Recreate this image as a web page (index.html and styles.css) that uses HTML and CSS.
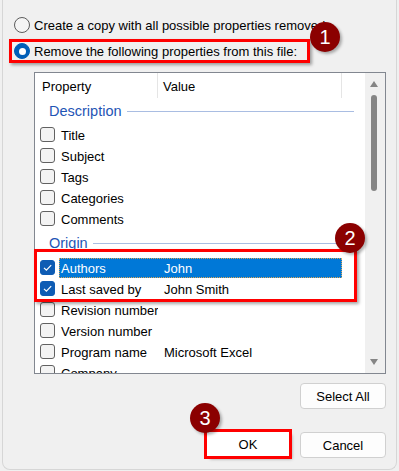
FILE: index.html
```html
<!DOCTYPE html>
<html>
<head>
<meta charset="utf-8">
<link rel="stylesheet" href="styles.css">
</head>
<body>
<div class="window">
  <div class="opt opt-first">
    <span class="radio"></span>
    <span class="opt-text">Create a copy with all possible properties removed</span>
  </div>
  <div class="opt opt-sel">
    <span class="radio radio-on"><span class="dot"></span></span>
    <span class="opt-text">Remove the following properties from this file:</span>
  </div>

  <div class="list">
    <div class="list-main">
      <div class="head">
        <div class="hcell hc1">Property</div>
        <div class="hcell hc2">Value</div>
        <div class="hcell hc3"></div>
      </div>
      <div class="group"><span class="gtext">Description</span><span class="rule"></span></div>
      <div class="row"><span class="cb"></span><div class="cells"><span class="name">Title</span><span class="val"></span></div></div>
      <div class="row"><span class="cb"></span><div class="cells"><span class="name">Subject</span><span class="val"></span></div></div>
      <div class="row"><span class="cb"></span><div class="cells"><span class="name">Tags</span><span class="val"></span></div></div>
      <div class="row"><span class="cb"></span><div class="cells"><span class="name">Categories</span><span class="val"></span></div></div>
      <div class="row"><span class="cb"></span><div class="cells"><span class="name">Comments</span><span class="val"></span></div></div>
      <div class="group group-2"><span class="gtext">Origin</span><span class="rule"></span></div>
      <div class="row"><span class="cb cb-on"><svg viewBox="0 0 15 15" width="15" height="15"><path d="M4 7.8 L6.4 10.2 L11.2 5.2" fill="none" stroke="#fff" stroke-width="1.2"/></svg></span><div class="cells cells-sel"><span class="name">Authors</span><span class="val">John</span></div></div>
      <div class="row"><span class="cb cb-on"><svg viewBox="0 0 15 15" width="15" height="15"><path d="M4 7.8 L6.4 10.2 L11.2 5.2" fill="none" stroke="#fff" stroke-width="1.2"/></svg></span><div class="cells"><span class="name">Last saved by</span><span class="val">John Smith</span></div></div>
      <div class="row"><span class="cb"></span><div class="cells"><span class="name">Revision number</span><span class="val"></span></div></div>
      <div class="row"><span class="cb"></span><div class="cells"><span class="name">Version number</span><span class="val"></span></div></div>
      <div class="row"><span class="cb"></span><div class="cells"><span class="name">Program name</span><span class="val">Microsoft Excel</span></div></div>
      <div class="row"><span class="cb"></span><div class="cells"><span class="name">Company</span><span class="val"></span></div></div>
    </div>
    <div class="scroll">
      <svg class="arrow" viewBox="0 0 8 6" width="8" height="6"><path d="M4 0 L8 6 L0 6 Z" fill="#858585"/></svg>
      <div class="thumb"></div>
      <div class="spacer"></div>
      <svg class="arrow" viewBox="0 0 8 6" width="8" height="6"><path d="M0 0 L8 0 L4 6 Z" fill="#858585"/></svg>
    </div>
  </div>

  <div class="actions">
    <button class="btn">Select All</button>
    <div class="btn-row">
      <div class="ok-wrap">
        <button class="btn btn-ok">OK</button>
        <span class="badge badge-3">3</span>
      </div>
      <button class="btn">Cancel</button>
    </div>
  </div>

  <span class="mark mark-1"></span>
  <span class="mark mark-2"></span>
  <span class="badge badge-1">1</span>
  <span class="badge badge-2">2</span>
</div>
</body>
</html>
```

FILE: styles.css
```css
* { box-sizing: border-box; }
html, body { margin: 0; padding: 0; }
body {
  background: #f0f0f0;
  font-family: "Segoe UI", "Liberation Sans", Arial, sans-serif;
  font-size: 13px;
  color: #000;
  width: 399px;
  height: 471px;
  overflow: hidden;
}
.window {
  position: relative;
  margin-left: 2px;
  width: 395px;
  height: 470px;
  border: 1px solid #d6d6d6;
  border-top: 0;
  border-radius: 0 0 8px 8px;
  padding-top: 17px;
}
.opt {
  display: flex;
  align-items: center;
  height: 16px;
  margin-left: 11px;
}
.opt-sel { margin-top: 9px; height: 18px; }
.radio {
  width: 16px;
  height: 16px;
  border-radius: 50%;
  border: 1px solid #5c5c5c;
  background: #f5f5f5;
  flex: none;
  display: flex;
  align-items: center;
  justify-content: center;
}
.radio-on { background: #005fb8; border-color: #005fb8; }
.dot { width: 7px; height: 7px; border-radius: 50%; background: #fff; }
.opt-text { margin-left: 4px; white-space: nowrap; }

.list {
  margin-top: 12px;
  margin-left: 31px;
  width: 352px;
  height: 302px;
  border: 1px solid #828790;
  background: #fff;
  display: flex;
}
.list-main {
  flex: 1;
  overflow: hidden;
  display: flex;
  flex-direction: column;
}
.head {
  display: grid;
  grid-template-columns: 123px 184px 1fr;
  height: 25px;
  flex: none;
}
.hcell {
  border-right: 1px solid #e5e5e5;
  display: flex;
  align-items: center;
  height: 25px;
  padding-top: 2px;
}
.hc1 { padding-left: 7px; }
.hc2 { padding-left: 5px; }
.hc3 { border-right: 0; }
.group {
  display: flex;
  align-items: center;
  height: 26px;
  flex: none;
  padding-left: 14px;
  padding-right: 11px;
}
.group-2 { height: 28px; }
.gtext {
  color: #1f55b5;
  font-size: 14.5px;
  white-space: nowrap;
}
.rule {
  flex: 1;
  height: 1px;
  background: #a9bde2;
  margin-left: 5px;
  margin-top: 1px;
}
.row {
  display: grid;
  grid-template-columns: 24px 1fr;
  height: 21px;
  flex: none;
  align-items: center;
}
.cb {
  margin-left: 5px;
  width: 15px;
  height: 15px;
  border: 1px solid #616161;
  border-radius: 3px;
  background: #f3f3f3;
  display: block;
}
.cb-on {
  background: #0e5cb4;
  border-color: #0e5cb4;
}
.cb-on svg { display: block; margin: -1px; }
.cells {
  display: grid;
  grid-template-columns: 99px 184px;
  width: 283px;
  height: 20px;
  align-items: center;
  align-self: end;
}
.name { padding-left: 2px; white-space: nowrap; overflow: hidden; }
.val { padding-left: 6px; white-space: nowrap; }
.cells-sel {
  background: #0078d7;
  color: #fff;
  outline: 1px dotted #d9a65a;
  outline-offset: -1px;
}

.scroll {
  width: 20px;
  flex: none;
  background: #f0f0f0;
  display: flex;
  flex-direction: column;
  align-items: center;
  padding: 8px 0 8px 0;
}
.arrow { display: block; flex: none; margin-left: -2px; }
.thumb {
  margin-top: 8px;
  width: 6px;
  height: 96px;
  border-radius: 3px;
  background: #858585;
  margin-left: -2px;
}
.spacer { flex: 1; }

.actions {
  display: flex;
  flex-direction: column;
  align-items: flex-end;
  margin-top: 9px;
  margin-right: 10px;
}
.btn {
  font-family: inherit;
  font-size: 13px;
  width: 86px;
  height: 26px;
  background: #fdfdfd;
  border: 1px solid #d0d0d0;
  border-radius: 4px;
  color: #000;
  padding: 0;
}
.btn-row {
  display: flex;
  align-items: flex-start;
  gap: 11px;
  margin-top: 23px;
}
.ok-wrap { position: relative; }
.btn-ok {
  width: 82px;
  height: 24px;
  border: 0;
  border-radius: 0;
  background: #fff;
  outline: 3px solid #ff0000;
  box-shadow: 3px 3px 3px rgba(0,0,0,0.35);
}

.mark {
  position: absolute;
  border: 3px solid #ff0000;
  box-shadow: 2px 2px 3px rgba(0,0,0,0.35);
}
.mark-1 { left: 6px; top: 39px; width: 301px; height: 24px; }
.mark-2 { left: 31px; top: 249px; width: 323px; height: 53px; }

.badge {
  position: absolute;
  width: 30px;
  height: 30px;
  border-radius: 50%;
  background: #8b0000;
  color: #fff;
  font-size: 20px;
  display: flex;
  align-items: center;
  justify-content: center;
  box-shadow: 2px 2px 3px rgba(0,0,0,0.3);
}
.badge-1 { left: 307px; top: 22px; }
.badge-2 { left: 332px; top: 223px; }
.badge-3 { left: -17px; top: -29px; }
```
